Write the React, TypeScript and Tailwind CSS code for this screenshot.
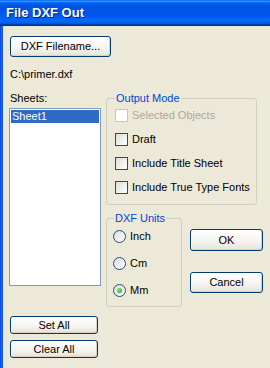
import React from 'react';

const btn =
  'flex items-center justify-center border border-[#003C74] rounded-[3px] bg-[linear-gradient(to_bottom,#ffffff,#f6f5f0_55%,#e6e3d7)] shadow-[inset_-1px_-1px_0_#d6d0c5,inset_1px_1px_0_#ffffff] text-black';

function Checkbox({ label, disabled }: { label: string; disabled?: boolean }) {
  return (
    <div className="flex items-center h-[13px] whitespace-nowrap">
      <span
        className={
          disabled
            ? 'w-[13px] h-[13px] border border-[#CAC8BB] bg-white shrink-0'
            : 'w-[13px] h-[13px] border border-[#1C5180] bg-[linear-gradient(135deg,#dcdcd7,#ffffff)] shrink-0'
        }
      />
      <span className={`ml-[4px] leading-[13px] ${disabled ? 'text-[#ACA899]' : 'text-black'}`}>
        {label}
      </span>
    </div>
  );
}

function Radio({ label, checked }: { label: string; checked?: boolean }) {
  return (
    <div className="flex items-center h-[13px]">
      <span className="w-[13px] h-[13px] rounded-full border border-[#1C5180] bg-[linear-gradient(135deg,#dcdcd7,#ffffff)] shrink-0 flex items-center justify-center">
        {checked && (
          <span className="w-[5px] h-[5px] rounded-full bg-[radial-gradient(circle_at_35%_35%,#7be27a,#21a121)]" />
        )}
      </span>
      <span className="ml-[4px] leading-[13px]">{label}</span>
    </div>
  );
}

export default function App() {
  return (
    <div
      className="w-[270px] h-[368px] overflow-hidden bg-[#ECE9D8] flex flex-col text-[11px] text-black"
      style={{ fontFamily: '"Liberation Sans", Arial, sans-serif' }}
    >
      <div className="h-[26px] shrink-0 flex items-center pl-[6px] bg-[linear-gradient(to_bottom,#0058EE_0%,#3593FF_4%,#288EFF_6%,#127DFF_8%,#036FFC_10%,#0262EE_14%,#0057E5_20%,#0054E3_24%,#0055EB_56%,#005BF5_66%,#026AFE_76%,#0062EF_86%,#0052D6_92%,#0040AB_94%,#003092_100%)]">
        <span className="text-white font-bold text-[13px] [text-shadow:1px_1px_0_#0a1883]">
          File DXF Out
        </span>
      </div>

      <div className="flex flex-1">
        <div className="w-[3px] shrink-0 bg-[linear-gradient(to_right,#0831d9,#166aee_40%,#0855dd)]" />

        <div className="flex flex-col pl-[6px]">
          <button className={`${btn} mt-[10px] ml-[1px] w-[101px] h-[21px]`}>DXF Filename...</button>
          <div className="mt-[11px] ml-[1px] leading-[13px]">C:\primer.dxf</div>

          <div className="flex mt-[11px]">
            <div className="flex flex-col w-[92px]">
              <div className="ml-[1px] leading-[13px]">Sheets:</div>
              <div className="mt-[3px] h-[178px] border border-[#7F9DB9] bg-white p-[1px]">
                <div className="bg-[#316AC5] text-white h-[13px] leading-[13px] pl-[1px]">Sheet1</div>
              </div>
              <button className={`${btn} mt-[30px] ml-[1px] w-[88px] h-[18px]`}>Set All</button>
              <button className={`${btn} mt-[6px] ml-[1px] w-[88px] h-[18px]`}>Clear All</button>
            </div>

            <div className="flex flex-col ml-[5px]">
              <fieldset className="w-[151px] h-[113px] border border-[#D0D0BF] rounded-[3px] pl-[8px] pr-[2px] pt-[4px]">
                <legend className="ml-0 px-[1px] leading-[13px] text-[#0046D5]">Output Mode</legend>
                <div className="flex flex-col gap-[11px]">
                  <Checkbox label="Selected Objects" disabled />
                  <Checkbox label="Draft" />
                  <Checkbox label="Include Title Sheet" />
                  <Checkbox label="Include True Type Fonts" />
                </div>
              </fieldset>

              <div className="flex mt-[7px]">
                <fieldset className="w-[76px] h-[95px] border border-[#D0D0BF] rounded-[3px] px-[6px] pt-[5px]">
                  <legend className="ml-[1px] px-[1px] leading-[13px] text-[#0046D5]">DXF Units</legend>
                  <div className="flex flex-col gap-[14px]">
                    <Radio label="Inch" />
                    <Radio label="Cm" />
                    <Radio label="Mm" checked />
                  </div>
                </fieldset>
                <div className="flex flex-col ml-[8px] pt-[17px]">
                  <button className={`${btn} w-[73px] h-[22px]`}>OK</button>
                  <button className={`${btn} mt-[21px] w-[73px] h-[21px]`}>Cancel</button>
                </div>
              </div>
            </div>
          </div>
        </div>
      </div>
    </div>
  );
}
